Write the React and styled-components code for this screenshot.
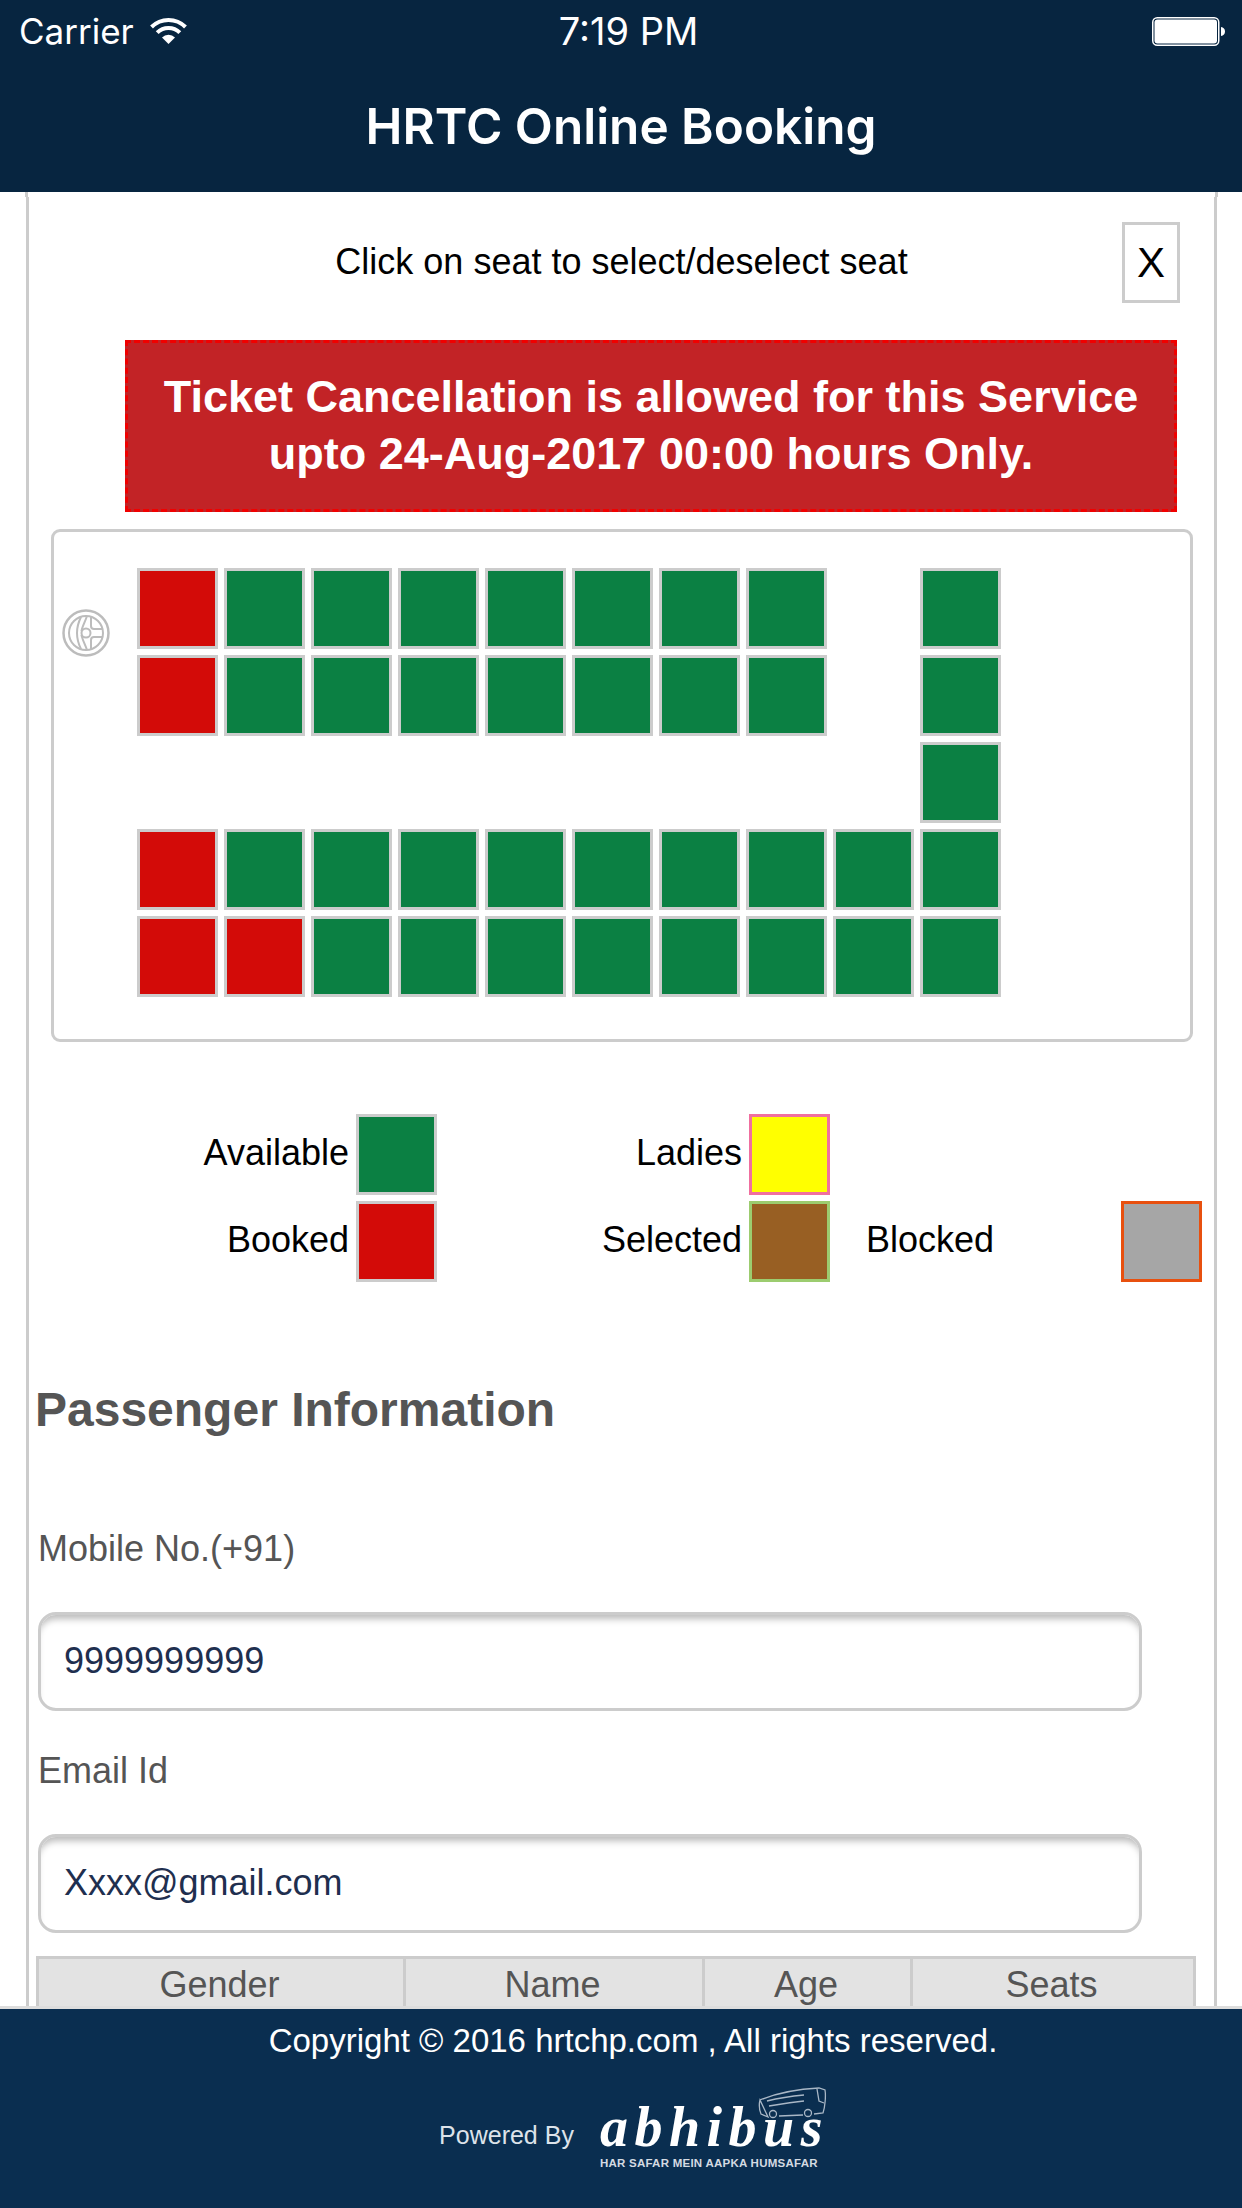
import React from "react";
import styled, { createGlobalStyle } from "styled-components";

const GlobalStyle = createGlobalStyle`
  html, body { margin: 0; padding: 0; background: #fff; }
  * { box-sizing: border-box; }
  body { font-family: "Liberation Sans", Arial, sans-serif; }
`;

const Page = styled.div`
  width: 1242px;
  height: 2208px;
  display: flex;
  flex-direction: column;
  overflow: hidden;
`;

const Header = styled.header`
  height: 192px;
  flex: none;
  background: #072540;
  color: #fff;
  font-family: Inter, sans-serif;
`;

const StatusBar = styled.div`
  height: 62px;
  display: grid;
  grid-template-columns: 1fr auto 1fr;
  align-items: center;
  padding: 0 17px 0 19px;
  font-size: 35px;
`;

const Carrier = styled.div`
  display: flex;
  align-items: center;
  gap: 16px;
`;

const Time = styled.div`
  margin-left: 13px;
  font-size: 38px;
`;

const BatteryWrap = styled.div`
  justify-self: end;
  display: flex;
`;

const Title = styled.h1`
  margin: 0;
  padding-top: 35px;
  text-align: center;
  font-size: 49.5px;
  line-height: 58px;
  font-weight: 600;
`;

const Main = styled.main`
  flex: 1;
  min-height: 0;
  overflow: hidden;
`;

const Card = styled.div`
  position: relative;
  margin-left: 26px;
  width: 1191px;
  height: 100%;
  background: #fff;
  border-left: 3px solid #ccc;
  border-right: 3px solid #ccc;

  &::before,
  &::after {
    content: "";
    position: absolute;
    top: 0;
    width: 4px;
    height: 5px;
    background: #fff;
  }
  &::before {
    left: -4px;
    border-left: 3px solid #ccc;
  }
  &::after {
    right: -4px;
    border-right: 3px solid #ccc;
  }
`;

const TopRow = styled.div`
  display: grid;
  grid-template-columns: 1fr auto 1fr;
  align-items: center;
  padding: 30px 34px 0;
`;

const Hint = styled.div`
  margin-bottom: 2px;
  font-size: 36px;
  color: #000;
`;

const CloseButton = styled.div`
  justify-self: end;
  width: 58px;
  height: 81px;
  border: 3px solid #ccc;
  display: flex;
  align-items: center;
  justify-content: center;
  font-size: 42px;
  color: #000;
`;

const Banner = styled.div`
  margin: 37px 37px 0 96px;
  padding: 25px 0 27px;
  border: 3px dashed #f00000;
  background: #c22326;
  color: #fff;
  font-size: 45px;
  line-height: 57px;
  font-weight: 700;
  text-align: center;
`;

const SeatBox = styled.div`
  margin: 17px 0 0 22px;
  width: 1142px;
  height: 513px;
  padding: 36px 0 0 8px;
  border: 3px solid #ccc;
  border-radius: 9px;
  display: flex;
  align-items: flex-start;
`;

const Steering = styled.svg`
  width: 48px;
  height: 48px;
  margin: 41px 27px 0 0;
  flex: none;
`;

const SeatGrid = styled.div`
  display: grid;
  grid-template-columns: repeat(10, 81px);
  grid-auto-rows: 81px;
  gap: 6px;
`;

const seatColors = {
  available: { fill: "#0b8043", edge: "#ccc" },
  booked: { fill: "#d30b08", edge: "#ccc" },
  ladies: { fill: "#ffff00", edge: "#f06f9f" },
  selected: { fill: "#985f23", edge: "#9ccc6f" },
  blocked: { fill: "#a6a6a6", edge: "#e8500f" },
};

const Seat = styled.div`
  width: 81px;
  height: 81px;
  background: ${(p) => seatColors[p.$status].fill};
  border: 3px solid ${(p) => seatColors[p.$status].edge};
`;

const EmptySeat = styled.div``;

const Legend = styled.div`
  margin-top: 72px;
  display: grid;
  grid-template-columns: 408px 393px 336px;
  grid-auto-rows: 81px;
  row-gap: 6px;
`;

const LegendItem = styled.div`
  display: flex;
  align-items: center;
  justify-content: ${(p) => (p.$spread ? "space-between" : "flex-end")};
  gap: 7px;
  margin-left: ${(p) => (p.$spread ? "36px" : "0")};
  width: ${(p) => (p.$spread ? "336px" : "auto")};
  font-size: 36px;
  color: #000;
`;

const LegendLabel = styled.span`
  margin-bottom: 3px;
`;

const Heading = styled.h2`
  margin: 101px 0 0 6px;
  font-size: 48px;
  line-height: 54px;
  font-weight: 700;
  color: #555;
`;

const FieldLabel = styled.label`
  display: block;
  margin: ${(p) => p.$top}px 0 ${(p) => p.$bottom}px 9px;
  font-size: 36px;
  line-height: 42px;
  color: #555;
`;

const Input = styled.input`
  display: block;
  margin-left: 9px;
  width: 1104px;
  height: 99px;
  padding: 0 23px 2px;
  border: 3px solid #ccc;
  border-radius: 18px;
  box-shadow: inset 0 8px 7px -4px #bbb;
  outline: none;
  background: #fff;
  font-family: "Liberation Sans", Arial, sans-serif;
  font-size: 36px;
  color: #1f2f4f;
`;

const Table = styled.table`
  margin: 23px 0 0 7px;
  width: 1160px;
  table-layout: fixed;
  border-collapse: separate;
  border-spacing: 0;
  border: 3px solid #ccc;
`;

const Th = styled.th`
  width: ${(p) => p.$width}px;
  height: 60px;
  padding: 0 3px 9px 0;
  background: #e3e3e3;
  border-right: ${(p) => (p.$last ? "0" : "3px solid #ccc")};
  font-size: 36px;
  line-height: 48px;
  font-weight: 400;
  color: #555;
`;

const Footer = styled.footer`
  height: 202px;
  flex: none;
  padding-left: 24px;
  border-top: 3px solid #ddd;
  background: #0a2e50;
  color: #fff;
  text-align: center;
`;

const Copyright = styled.div`
  padding-top: 12px;
  font-size: 33px;
  line-height: 40px;
`;

const PoweredRow = styled.div`
  margin-top: 26px;
  display: flex;
  justify-content: center;
  align-items: flex-start;
  gap: 26px;
`;

const PoweredBy = styled.div`
  margin-top: 32px;
  font-size: 25px;
  line-height: 32px;
  color: #dde3ea;
`;

const Logo = styled.div`
  position: relative;
  width: 227px;
  height: 84px;
  text-align: left;
`;

const LogoWord = styled.div`
  padding-top: 12px;
  font-family: "Liberation Serif", serif;
  font-style: italic;
  font-weight: 700;
  font-size: 56px;
  line-height: 56px;
  letter-spacing: 6.5px;
  color: #fff;
`;

const LogoTag = styled.div`
  margin-top: 2px;
  font-size: 11.5px;
  line-height: 12px;
  font-weight: 700;
  letter-spacing: 0.25px;
  white-space: nowrap;
  color: #d5dbe2;
`;

const LogoBus = styled.svg`
  position: absolute;
  top: 0;
  right: 0;
  width: 70px;
  height: 32px;
`;

const SEAT_ROWS = [
  "BAAAAAAA.A",
  "BAAAAAAA.A",
  ".........A",
  "BAAAAAAAAA",
  "BBAAAAAAAA",
];

const WifiIcon = () => (
  <svg width="37" height="26" viewBox="0 0 37 26" fill="none">
    <path d="M1.53 9.03A24 24 0 0 1 35.47 9.03" stroke="#fff" strokeWidth="4" />
    <path d="M7.19 14.69A16 16 0 0 1 29.81 14.69" stroke="#fff" strokeWidth="4" />
    <path d="M18.5 26L12 19.5A9.2 9.2 0 0 1 25 19.5Z" fill="#fff" />
  </svg>
);

const BatteryIcon = () => (
  <svg width="73" height="29" viewBox="0 0 73 29" fill="none">
    <rect x="0.75" y="0.75" width="66" height="27.5" rx="4.5" stroke="#fff" strokeWidth="1.5" />
    <rect x="2.5" y="2.5" width="62.5" height="24" rx="3" fill="#fff" />
    <path d="M69 10C71.5 10.5 73 12 73 14.5C73 17 71.5 18.5 69 19Z" fill="#fff" />
  </svg>
);

const SteeringIcon = () => (
  <Steering viewBox="0 0 48 48" fill="none" stroke="#bcbcbc" strokeWidth="2">
    <circle cx="24" cy="24" r="22.5" strokeWidth="2.5" />
    <circle cx="24" cy="24" r="17" />
    <circle cx="24" cy="24" r="4.5" />
    <path d="M19 8C16 14 15 19 15 24C15 29 16 34 19 40" />
    <path d="M25 7C23 13 20 18 19.5 22M25 41C23 35 20 30 19.5 26" />
    <path d="M29 8V17Q29 20 32 20H41M29 40V31Q29 28 32 28H41" />
  </Steering>
);

const BusIcon = () => (
  <LogoBus viewBox="0 0 70 32" fill="none" stroke="#a9b7c6" strokeWidth="1.3">
    <path d="M3 13C20 6 42 2 62 1L68 3C69 9 68 20 66 26L57 27M46 28L22 29M11 30L4 27C2 22 2 17 3 13Z" />
    <path d="M10 14C22 11 36 9 47 8M12 19C24 17 36 15 47 14" />
    <path d="M60 2L62 14L67 16" />
    <circle cx="16" cy="27" r="3.5" />
    <circle cx="51" cy="26" r="3.5" />
  </LogoBus>
);

const App = () => {
  return (
    <Page>
      <GlobalStyle />
      <Header>
        <StatusBar>
          <Carrier>
            Carrier
            <WifiIcon />
          </Carrier>
          <Time>7:19 PM</Time>
          <BatteryWrap>
            <BatteryIcon />
          </BatteryWrap>
        </StatusBar>
        <Title>HRTC Online Booking</Title>
      </Header>
      <Main>
        <Card>
          <TopRow>
            <span />
            <Hint>Click on seat to select/deselect seat</Hint>
            <CloseButton>X</CloseButton>
          </TopRow>
          <Banner>
            Ticket Cancellation is allowed for this Service
            <br />
            upto 24-Aug-2017 00:00 hours Only.
          </Banner>
          <SeatBox>
            <SteeringIcon />
            <SeatGrid>
              {SEAT_ROWS.flatMap((row, r) =>
                row.split("").map((c, i) =>
                  c === "." ? (
                    <EmptySeat key={`${r}-${i}`} />
                  ) : (
                    <Seat key={`${r}-${i}`} $status={c === "B" ? "booked" : "available"} />
                  )
                )
              )}
            </SeatGrid>
          </SeatBox>
          <Legend>
            <LegendItem>
              <LegendLabel>Available</LegendLabel>
              <Seat $status="available" />
            </LegendItem>
            <LegendItem>
              <LegendLabel>Ladies</LegendLabel>
              <Seat $status="ladies" />
            </LegendItem>
            <span />
            <LegendItem>
              <LegendLabel>Booked</LegendLabel>
              <Seat $status="booked" />
            </LegendItem>
            <LegendItem>
              <LegendLabel>Selected</LegendLabel>
              <Seat $status="selected" />
            </LegendItem>
            <LegendItem $spread>
              <LegendLabel>Blocked</LegendLabel>
              <Seat $status="blocked" />
            </LegendItem>
          </Legend>
          <Heading>Passenger Information</Heading>
          <FieldLabel $top={91} $bottom={42}>Mobile No.(+91)</FieldLabel>
          <Input readOnly value="9999999999" />
          <FieldLabel $top={39} $bottom={42}>Email Id</FieldLabel>
          <Input readOnly value="Xxxx@gmail.com" />
          <Table>
            <thead>
              <tr>
                <Th $width={367}>Gender</Th>
                <Th $width={299}>Name</Th>
                <Th $width={208}>Age</Th>
                <Th $width={280} $last>Seats</Th>
              </tr>
            </thead>
          </Table>
        </Card>
      </Main>
      <Footer>
        <Copyright>Copyright © 2016 hrtchp.com , All rights reserved.</Copyright>
        <PoweredRow>
          <PoweredBy>Powered By</PoweredBy>
          <Logo>
            <BusIcon />
            <LogoWord>abhibus</LogoWord>
            <LogoTag>HAR SAFAR MEIN AAPKA HUMSAFAR</LogoTag>
          </Logo>
        </PoweredRow>
      </Footer>
    </Page>
  );
};

export default App;
